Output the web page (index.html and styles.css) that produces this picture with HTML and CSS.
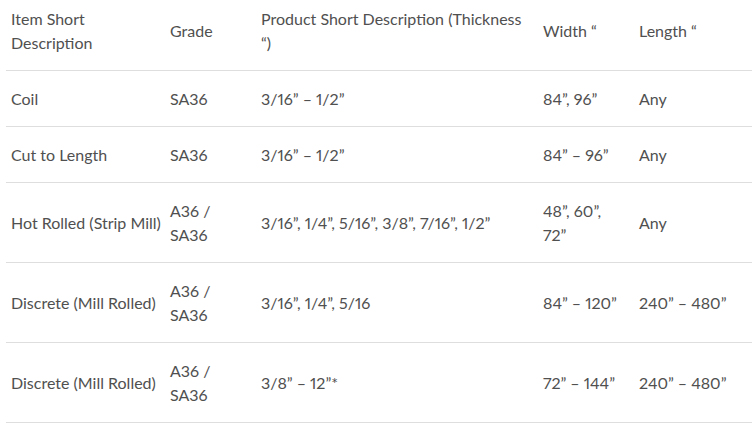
FILE: index.html
```html
<!DOCTYPE html>
<html>
<head>
<meta charset="utf-8">
<link rel="stylesheet" href="styles.css">
</head>
<body>
<table class="spec">
  <thead>
    <tr>
      <th>Item Short Description</th>
      <th>Grade</th>
      <th>Product Short Description (Thickness “)</th>
      <th>Width “</th>
      <th>Length “</th>
    </tr>
  </thead>
  <tbody>
    <tr>
      <td>Coil</td>
      <td>SA36</td>
      <td>3/16” – 1/2”</td>
      <td>84”, 96”</td>
      <td>Any</td>
    </tr>
    <tr>
      <td>Cut to Length</td>
      <td>SA36</td>
      <td>3/16” – 1/2”</td>
      <td>84” – 96”</td>
      <td>Any</td>
    </tr>
    <tr>
      <td>Hot Rolled (Strip Mill)</td>
      <td>A36 / SA36</td>
      <td>3/16”, 1/4”, 5/16”, 3/8”, 7/16”, 1/2”</td>
      <td>48”, 60”, 72”</td>
      <td>Any</td>
    </tr>
    <tr>
      <td>Discrete (Mill Rolled)</td>
      <td>A36 / SA36</td>
      <td>3/16”, 1/4”, 5/16</td>
      <td>84” – 120”</td>
      <td>240” – 480”</td>
    </tr>
    <tr>
      <td>Discrete (Mill Rolled)</td>
      <td>A36 / SA36</td>
      <td>3/8” – 12”*</td>
      <td>72” – 144”</td>
      <td>240” – 480”</td>
    </tr>
  </tbody>
</table>
</body>
</html>
```

FILE: styles.css
```css
html, body {
  margin: 0;
  padding: 0;
  background: #fff;
}
body {
  font-family: Lato, "Open Sans", Arial, sans-serif;
  font-size: 16px;
  color: #505050;
  font-variant-numeric: proportional-nums;
  overflow: hidden;
}
.spec {
  border-collapse: collapse;
  margin: -9px 0 0 6px;
  width: 746px;
  table-layout: fixed;
}
.spec th, .spec td {
  box-sizing: border-box;
  font-weight: normal;
  text-align: left;
  vertical-align: middle;
  padding: 16px 4px 15px 5px;
  line-height: 24px;
  border-bottom: 1px solid #dedede;
}
.spec th:nth-child(1) { width: 159px; }
.spec th:nth-child(2) { width: 91px; }
.spec th:nth-child(3) { width: 282px; }
.spec th:nth-child(4) { width: 96px; }
.spec th:nth-child(5) { width: 118px; }
.spec th:nth-child(2), .spec td:nth-child(2) { padding-right: 14px; }
.spec th:nth-child(3), .spec td:nth-child(3) { padding-right: 12px; }
.spec th:nth-child(4), .spec td:nth-child(4) { padding-right: 16px; }
```
